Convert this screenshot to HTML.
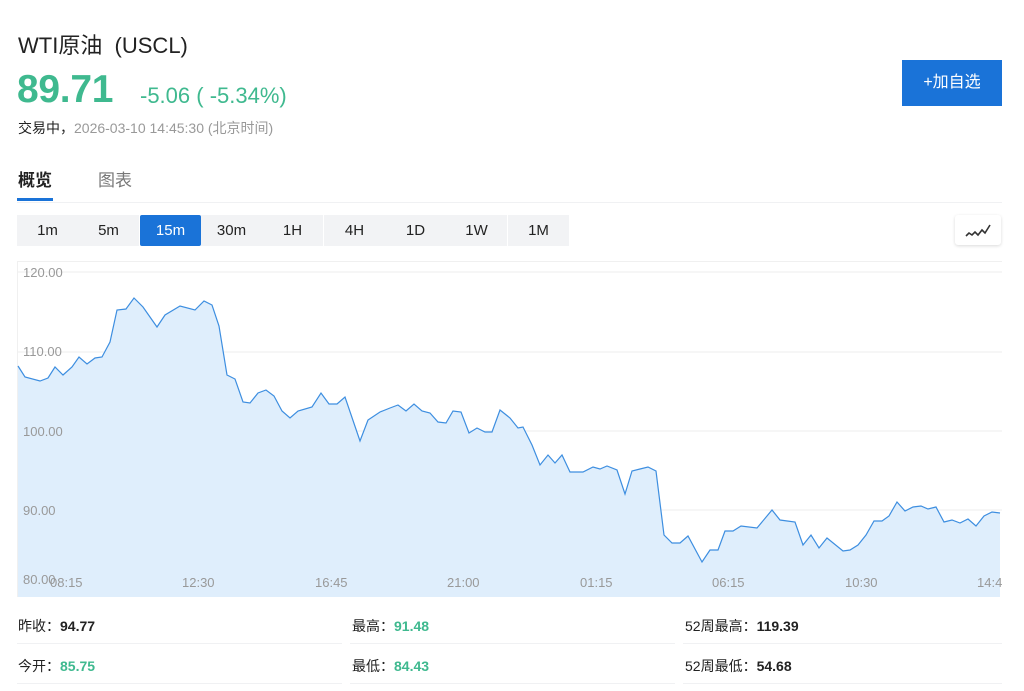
<!DOCTYPE html>
<html><head><meta charset="utf-8"><style>
*{margin:0;padding:0;box-sizing:border-box}
body{width:1024px;height:691px;background:#fff;font-family:"Liberation Sans","Noto Sans CJK SC",sans-serif;position:relative;overflow:hidden;color:#222}
.a{position:absolute;white-space:nowrap}
.tb{position:absolute;top:215px;height:31px;width:61px;text-align:center;line-height:31px;font-size:15px;color:#222;background:#f2f3f5}
.tb.on{background:#1a73d8;color:#fff;border-radius:2px}
.st{position:absolute;font-size:14px;color:#222}
.st b{font-weight:bold}
.g{color:#3fb98f}
.ln{position:absolute;height:1px;background:#f0f1f3}
</style></head><body>
<div class="a" style="left:18px;top:28px;font-size:22px;color:#222">WTI原油&nbsp;&nbsp;(USCL)</div>
<div class="a" style="left:17px;top:68px;font-size:39px;font-weight:bold;color:#3fb98f;letter-spacing:-0.3px">89.71</div>
<div class="a" style="left:140px;top:83px;font-size:22px;color:#3fb98f">-5.06 ( -5.34%)</div>
<div class="a" style="left:18px;top:118px;font-size:14px;color:#222">交易中，<span style="color:#999">2026-03-10 14:45:30 (北京时间)</span></div>
<div class="a" style="left:902px;top:60px;width:100px;height:46px;background:#1a73d8;color:#fff;font-size:16px;text-align:center;line-height:46px">+加自选</div>
<div class="a" style="left:18px;top:166px;font-size:17px;font-weight:bold;color:#222">概览</div>
<div class="a" style="left:98px;top:166px;font-size:17px;color:#777">图表</div>
<div class="a" style="left:17px;top:198px;width:36px;height:3px;background:#1a73d8"></div>
<div class="ln" style="left:17px;top:202px;width:985px"></div>
<div class="tb" style="left:17px">1m</div>
<div class="tb" style="left:78px">5m</div>
<div class="tb on" style="left:140px">15m</div>
<div class="tb" style="left:201px">30m</div>
<div class="tb" style="left:262px">1H</div>
<div class="tb" style="left:324px">4H</div>
<div class="tb" style="left:385px">1D</div>
<div class="tb" style="left:446px">1W</div>
<div class="tb" style="left:508px">1M</div>
<div class="a" style="left:955px;top:215px;width:46px;height:30px;background:#fff;border-radius:3px;box-shadow:0 1px 3px rgba(0,0,0,.15)">
<svg width="46" height="30"><path d="M11 21 L14 18 L17 20 L20 17 L23 20 L27 15 L30 18 L35 10" fill="none" stroke="#333" stroke-width="1.6"/></svg></div>
<svg class="a" style="left:0;top:0" width="1002" height="600">
<path d="M17.5 597 V261.5 H1002" fill="none" stroke="#f0f0f0"/>
<g stroke="#eeeeee"><line x1="18" y1="272" x2="1002" y2="272"/><line x1="18" y1="352" x2="1002" y2="352"/><line x1="18" y1="431" x2="1002" y2="431"/><line x1="18" y1="510" x2="1002" y2="510"/></g>
<path d="M18,366 L25,377 L40,381 L48,378 L55,367 L63,375 L72,367 L79,357 L87,364 L95,358 L102,357 L110,342 L117,310 L126,309 L134,298 L143,307 L157,327 L165,315 L180,306 L195,310 L204,301 L212,305 L219,326 L227,375 L235,379 L243,402 L250,403 L258,393 L266,390 L274,396 L282,411 L290,418 L298,411 L312,407 L321,393 L329,404 L337,404 L345,397 L360,441 L368,420 L380,412 L390,408 L398,405 L406,411 L414,404 L422,411 L430,413 L438,422 L446,423 L453,411 L461,412 L469,433 L477,428 L485,432 L492,432 L500,410 L510,418 L518,428 L523,427 L532,445 L540,465 L548,455 L555,463 L562,455 L570,472 L583,472 L593,467 L600,469 L607,466 L617,470 L625,494 L632,471 L640,469 L648,467 L656,471 L664,535 L672,543 L680,543 L688,536 L702,562 L710,550 L718,550 L725,531 L733,531 L741,526 L757,528 L772,510 L780,520 L795,522 L803,545 L811,535 L819,548 L827,538 L843,551 L850,550 L858,545 L866,535 L874,521 L882,521 L889,516 L897,502 L905,511 L913,507 L921,506 L928,509 L936,507 L944,522 L952,520 L960,523 L968,519 L976,526 L984,516 L992,512 L1000,513 L1000,597 L18,597 Z" fill="#dfeefc"/>
<path d="M18,366 L25,377 L40,381 L48,378 L55,367 L63,375 L72,367 L79,357 L87,364 L95,358 L102,357 L110,342 L117,310 L126,309 L134,298 L143,307 L157,327 L165,315 L180,306 L195,310 L204,301 L212,305 L219,326 L227,375 L235,379 L243,402 L250,403 L258,393 L266,390 L274,396 L282,411 L290,418 L298,411 L312,407 L321,393 L329,404 L337,404 L345,397 L360,441 L368,420 L380,412 L390,408 L398,405 L406,411 L414,404 L422,411 L430,413 L438,422 L446,423 L453,411 L461,412 L469,433 L477,428 L485,432 L492,432 L500,410 L510,418 L518,428 L523,427 L532,445 L540,465 L548,455 L555,463 L562,455 L570,472 L583,472 L593,467 L600,469 L607,466 L617,470 L625,494 L632,471 L640,469 L648,467 L656,471 L664,535 L672,543 L680,543 L688,536 L702,562 L710,550 L718,550 L725,531 L733,531 L741,526 L757,528 L772,510 L780,520 L795,522 L803,545 L811,535 L819,548 L827,538 L843,551 L850,550 L858,545 L866,535 L874,521 L882,521 L889,516 L897,502 L905,511 L913,507 L921,506 L928,509 L936,507 L944,522 L952,520 L960,523 L968,519 L976,526 L984,516 L992,512 L1000,513" fill="none" stroke="#3d8ee0" stroke-width="1.2"/>
<g font-family="Liberation Sans,sans-serif" font-size="13" fill="#999">
<text x="23" y="277">120.00</text><text x="23" y="356">110.00</text><text x="23" y="436">100.00</text><text x="23" y="515">90.00</text><text x="23" y="584">80.00</text>
<text x="50" y="587">08:15</text><text x="182" y="587">12:30</text><text x="315" y="587">16:45</text><text x="447" y="587">21:00</text><text x="580" y="587">01:15</text><text x="712" y="587">06:15</text><text x="845" y="587">10:30</text><text x="977" y="587">14:45</text>
</g></svg>
<div class="st" style="left:18px;top:616px">昨收：<b>94.77</b></div>
<div class="st" style="left:352px;top:616px">最高：<b class="g">91.48</b></div>
<div class="st" style="left:685px;top:616px">52周最高：<b>119.39</b></div>
<div class="ln" style="left:17px;top:643px;width:325px"></div>
<div class="ln" style="left:350px;top:643px;width:325px"></div>
<div class="ln" style="left:683px;top:643px;width:319px"></div>
<div class="st" style="left:18px;top:656px">今开：<b class="g">85.75</b></div>
<div class="st" style="left:352px;top:656px">最低：<b class="g">84.43</b></div>
<div class="st" style="left:685px;top:656px">52周最低：<b>54.68</b></div>
<div class="ln" style="left:17px;top:683px;width:325px"></div>
<div class="ln" style="left:350px;top:683px;width:325px"></div>
<div class="ln" style="left:683px;top:683px;width:319px"></div>
</body></html>
